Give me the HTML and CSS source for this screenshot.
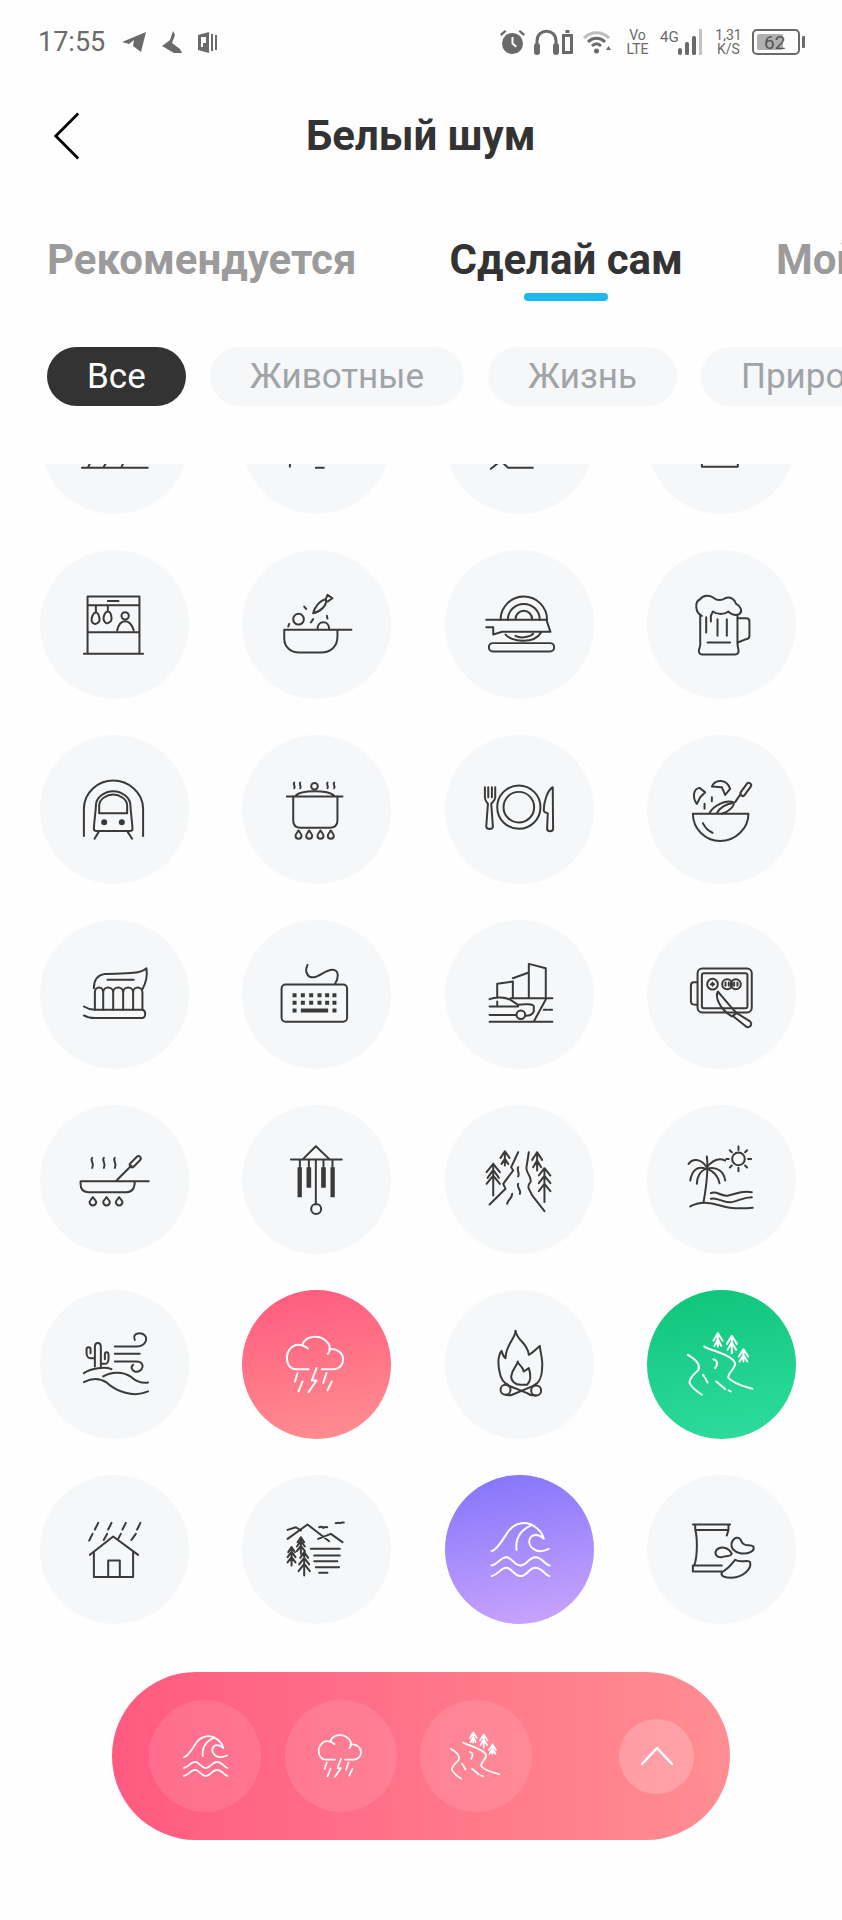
FILE: index.html
```html
<!DOCTYPE html>
<html lang="ru">
  <head>
    <meta charset="UTF-8" />
    <meta name="viewport" content="width=device-width, initial-scale=1.0" />
    <title>Белый шум</title>
    <link rel="stylesheet" href="styles.css">
  </head>
  <body>
    <svg class="sprite">
      <symbol id="wave" viewBox="73 613 448 448">
        <path d="M213 842C235 835 250 800 265 780C285 755 320 750 345 770C360 780 368 795 370 805C355 790 335 790 328 805C320 825 345 855 385 835" />
        <path d="M288 838C285 810 295 780 335 763" />
        <path d="M213 885C235 880 240 860 257 860C275 860 280 885 300 885C320 885 325 860 345 860C365 860 370 880 387 885" />
        <path d="M213 917C235 912 240 892 257 892C275 892 280 917 300 917C320 917 325 892 345 892C365 892 370 912 387 917" />
      </symbol>
      <symbol id="storm" viewBox="668 60 448 448">
        <path d="M868 298H830C805 298 795 265 810 240C825 218 850 222 866 236" />
        <path d="M850 224C860 195 910 190 930 225C935 240 932 245 926 252" />
        <path d="M930 238C955 235 972 250 972 270C972 285 960 298 945 298H908" />
        <path d="M892 295L878 332H892L868 367M835 310L827 335M850 335L838 365M922 310L912 340M938 335L925 362" />
      </symbol>
      <symbol id="river" viewBox="680 60 448 448">
        <path d="M893 230V190M880 212L893 190L907 212M883 228L893 208L903 228M935 250V198M920 222L935 198L950 222M922 240L935 218L948 240M970 275V238M956 260L970 238L984 260M958 275L970 256L982 275" />
        <path d="M852 230C880 245 935 255 945 280C945 300 920 310 925 325C945 345 975 350 997 357" />
        <path d="M803 255C830 270 840 285 835 300C825 310 805 325 808 340C815 355 830 365 845 375" />
        <path d="M880 268C890 270 895 280 885 295M848 315L852 320M855 325L862 338M888 335L915 358M925 362L932 365" />
      </symbol>
    </svg>

    <div class="status">
      <span class="time">17:55</span>
      <svg class="st st-plane" viewBox="0 0 24 20"><path d="M0 10L24 0L19 20L11 14L12 8L7 12Z" /></svg>
      <svg class="st st-shoe" viewBox="0 0 20 22"><path d="M11 0L8 9L0 15L12 22H20L18 18L10 12L13 4Z" /></svg>
      <svg class="st st-book" viewBox="0 0 21 21"><path d="M0 3L11 0V21L0 18ZM13 2H15V19H13ZM17 3H19V18H17Z" /><path class="st-hole" d="M3 5H8V11H5V15H3Z" /></svg>
      <div class="status-right">
        <svg class="st st-alarm" viewBox="0 0 25 24"><circle cx="12.5" cy="13.5" r="10.5" /><path d="M0 4L5 0L6.500 1.500L1.500 6ZM25 4L20 0L18.500 1.500L23.500 6Z" /><path class="st-hole" d="M11.500 7H13.500V13L17 16L15.500 17.500L11.500 14Z" /></svg>
        <svg class="st st-phones" viewBox="0 0 25 26"><path class="st-line" d="M3 18V12C3 -1 22 -1 22 12V18" /><rect x="0" y="14" width="6" height="12" rx="3" /><rect x="19" y="14" width="6" height="12" rx="3" /></svg>
        <svg class="st st-minibat" viewBox="0 0 11 24"><path d="M3.500 0H7.500V3H3.500ZM0 4H11V24H0Z" /><path class="st-hole" d="M3 7H8V21H3Z" /></svg>
        <svg class="st st-wifi" viewBox="0 0 29 24"><path class="st-line st-faint" d="M2 8C9 1 20 1 27 8" /><path class="st-line" d="M6 12C11 7 18 7 23 12M10 16C13 13 16 13 19 16" /><circle cx="14.500" cy="21" r="2.500" /><path d="M24 20L29 20L26.500 16Z" /></svg>
        <span class="st-stack st-volte"><span>Vo</span><span>LTE</span></span>
        <span class="st-4g">4G</span>
        <svg class="st st-bars" viewBox="0 0 24 26"><rect x="0" y="19" width="4" height="7" rx="2" /><rect x="7" y="13" width="4" height="13" rx="1.500" /><rect x="14" y="7" width="4" height="19" rx="1.500" /><rect class="st-faint-fill" x="21" y="0" width="3" height="26" /></svg>
        <span class="st-stack st-speed"><span>1,31</span><span>K/S</span></span>
        <div class="battery"><span class="battery-fill"></span><span class="battery-num">62</span></div>
        <span class="battery-nub"></span>
      </div>
    </div>

    <div class="header">
      <svg class="back" viewBox="0 0 30 52"><path d="M27 2L3 26L27 50" /></svg>
      <h1>Белый шум</h1>
    </div>

    <div class="tabs">
      <div class="tab">Рекомендуется</div>
      <div class="tab active">Сделай сам<span class="tab-line"></span></div>
      <div class="tab">Мой</div>
    </div>

    <div class="chips">
      <div class="chip active">Все</div>
      <div class="chip">Животные</div>
      <div class="chip">Жизнь</div>
      <div class="chip">Природа</div>
    </div>

    <div class="list">
      <div class="grid">
        <!-- row cut off by the scroll edge -->
        <div class="item"><svg class="icon" viewBox="0 0 448 448"><path d="M126 309H324M150 296L144 309M198 296L190 309M250 296L244 309" /></svg></div>
        <div class="item"><svg class="icon" viewBox="0 0 448 448"><path d="M144 300V306M222 309H246" /></svg></div>
        <div class="item"><svg class="icon" viewBox="0 0 448 448"><path d="M138 312L158 296M176 296L190 309H264" /></svg></div>
        <div class="item"><svg class="icon" viewBox="0 0 448 448"><path d="M165 290V306H273V290" /></svg></div>

        <div class="item"><svg class="icon" viewBox="60 60 448 448">
          <path d="M203 372V200H359V372M203 226H359M203 307H359M192 372H370M264 213H296" />
          <circle cx="316" cy="258" r="11" />
          <path d="M292 302C296 282 306 274 316 274S336 282 342 302" />
          <path d="M228 228V248C220 248 215 262 215 270S222 284 228 282S240 276 239 268S234 248 228 248ZM264 228V245C256 245 251 258 251 266S258 282 264 280S276 274 275 264S270 245 264 245Z" />
        </svg></div>
        <div class="item"><svg class="icon" viewBox="668 60 448 448">
          <path d="M795 300H997M795 300V325C795 352 815 368 840 368H905C935 368 955 350 955 320V300" />
          <circle cx="838" cy="268" r="16" />
          <path d="M895 298C895 270 930 270 930 298" />
          <path d="M882 250C885 235 900 212 920 208C925 225 905 245 882 250ZM920 208L925 195L940 205L925 215" />
          <path d="M855 230L861 237M810 282L807 290M882 268L875 278M923 258L925 266" />
        </svg></div>
        <div class="item"><svg class="icon" viewBox="73 60 448 448">
          <path d="M240 270A70 70 0 0 1 380 270M262 270A48 48 0 0 1 358 270M285 268A25 25 0 0 1 335 268" />
          <path d="M197 270H378L390 306H245L218 314V292H197" />
          <path d="M255 314C270 335 340 345 362 308M285 318C295 325 325 325 338 312" />
          <rect x="205" y="340" width="196" height="25" rx="12" />
        </svg></div>
        <div class="item"><svg class="icon" viewBox="680 60 448 448">
          <path d="M840 255V345C840 350 837 355 836 362C835 370 840 374 845 374H945C952 374 957 368 955 360C953 352 952 345 952 340V258" />
          <path d="M953 265H978C985 265 988 270 988 275V318C988 324 984 328 978 328L953 338" />
          <path d="M845 258C825 250 822 215 840 208C850 195 870 195 882 205C890 212 905 212 915 205C930 198 945 210 948 222C962 228 968 245 958 252C945 260 930 252 925 245C912 255 892 255 878 245L872 258V275" />
          <path d="M858 262V308M892 268V318M920 268V318M862 338H930" />
        </svg></div>

        <div class="item"><svg class="icon" viewBox="60 613 448 448">
          <path d="M192 917V835C192 785 235 750 280 750C325 750 370 785 370 835V917" />
          <path d="M222 895C222 880 228 840 228 825C228 800 255 782 280 782C305 782 332 800 332 825C332 840 338 880 338 895C338 900 333 902 330 902H230C225 902 222 900 222 895Z" />
          <path d="M238 848V825C238 805 262 792 280 792C298 792 322 805 322 825V848Z" />
          <circle class="solid" cx="253" cy="875" r="9" /><circle class="solid" cx="306" cy="875" r="9" />
          <path d="M236 905L224 925M324 905L337 925" />
        </svg></div>
        <div class="item"><svg class="icon" viewBox="668 613 448 448">
          <path d="M803 798H970M830 795C845 778 925 778 945 795" />
          <circle cx="886" cy="767" r="10" />
          <path d="M822 798V870C822 885 830 892 845 892H930C945 892 955 885 955 870V798" />
          <path d="M825 756C820 762 830 766 825 773M843 756C838 762 848 766 843 773M925 756C920 762 930 766 925 773M945 756C940 762 950 766 945 773" />
          <path d="M838 900C835 906 829 910 829 916A9 9 0 0 0 847 916C847 910 841 906 838 900ZM870 900C867 906 861 910 861 916A9 9 0 0 0 879 916C879 910 873 906 870 900ZM904 900C901 906 895 910 895 916A9 9 0 0 0 913 916C913 910 907 906 904 900ZM935 900C932 906 926 910 926 916A9 9 0 0 0 944 916C944 910 938 906 935 900Z" />
        </svg></div>
        <div class="item"><svg class="icon" viewBox="73 613 448 448">
          <circle cx="295" cy="830" r="65" /><circle cx="295" cy="830" r="46" />
          <path d="M193 770V800C193 812 200 815 202 820L197 888C197 898 218 898 217 888L212 820C214 815 224 812 224 800V770M203 770V800M214 770V800" />
          <path d="M397 770C380 780 370 815 370 840C370 845 378 848 382 848L380 895C380 905 398 905 398 895Z" />
        </svg></div>
        <div class="item"><svg class="icon" viewBox="680 613 448 448">
          <path d="M818 850H985C985 895 945 932 900 932C855 932 818 895 818 850Z" />
          <path d="M848 878C855 892 865 902 877 907" />
          <path d="M945 815L962 790M962 785L980 760C985 752 997 760 992 768L972 795C967 800 957 792 962 785Z" />
          <path d="M868 848C880 825 915 808 940 815C945 825 925 845 905 850M890 848C900 830 920 820 935 818" />
          <path d="M838 772C820 775 815 800 830 820L840 800L855 785ZM875 768C885 745 920 745 930 775L915 793L905 770Z" />
          <path d="M875 800V812M853 820V835" />
        </svg></div>

        <div class="item"><svg class="icon" viewBox="60 60 448 448">
          <path d="M222 265C222 240 235 225 255 222C300 220 360 225 380 205C384 230 378 250 368 268" />
          <path d="M263 240H342" />
          <path d="M225 330V278C225 258 250 258 250 278V330M250 278C250 258 280 258 280 278V330M280 278C280 258 310 258 310 278V330M310 278C310 258 340 258 340 278V330M340 278C340 258 368 258 368 278V330" />
          <path d="M192 320C200 325 210 330 225 330H365C380 330 380 355 365 355H225C210 355 200 352 192 347" />
        </svg></div>
        <div class="item"><svg class="icon" viewBox="668 60 448 448">
          <rect x="787" y="254" width="197" height="112" rx="12" />
          <path d="M865 195C855 215 865 235 885 232C905 228 925 205 945 210C960 215 958 235 948 252" />
          <path class="solid" d="M820 280h12v12h-12zM845 280h12v12h-12zM870 280h12v12h-12zM895 280h12v12h-12zM918 280h12v12h-12zM940 280h12v12h-12zM820 303h12v12h-12zM845 303h12v12h-12zM870 303h12v12h-12zM895 303h12v12h-12zM918 303h12v12h-12zM940 303h12v12h-12zM820 326h12v12h-12zM845 326h82v12h-82zM940 326h12v12h-12z" />
        </svg></div>
        <div class="item"><svg class="icon" viewBox="73 60 448 448">
          <path d="M230 292V252L277 245V292M277 235L325 218V292M325 192L376 205V292M325 192V292" />
          <path d="M207 298C225 290 255 292 270 300L293 315C310 312 340 312 340 320V335C335 345 325 348 316 348M285 346H207M207 320H293M230 305V320" />
          <circle cx="301" cy="345" r="13" />
          <path d="M270 295H378L340 365M378 295H396M370 330H380M385 330H395M207 366H396" />
        </svg></div>
        <div class="item"><svg class="icon" viewBox="680 60 448 448">
          <rect x="832" y="206" width="163" height="132" rx="14" />
          <rect x="845" y="220" width="137" height="105" rx="6" />
          <path d="M830 247H820C812 247 812 252 812 258V305C812 315 820 315 830 315" />
          <circle cx="877" cy="253" r="16" /><circle cx="921" cy="253" r="15" /><circle cx="947" cy="253" r="15" />
          <path d="M872 253H882M877 248V258M916 248V258M926 248V258M942 248V258M952 248V258" />
          <path d="M893 275C885 290 895 325 935 350L950 340C930 320 910 295 893 275Z" />
          <path d="M950 340L990 365C1000 375 985 390 975 378L940 350" />
        </svg></div>

        <div class="item"><svg class="icon" viewBox="60 613 448 448">
          <path d="M182 842H387M182 842V850C182 865 190 875 205 875H320C335 875 345 865 345 842" />
          <path d="M217 772C209 780 225 786 217 802M252 772C244 780 260 786 252 802M285 772C277 780 293 786 285 802" />
          <path d="M290 840L335 795M330 790L352 768C358 762 368 772 360 780L340 800C335 803 327 795 330 790Z" />
          <path d="M219 890C216 896 209 900 209 905A10 10 0 0 0 229 905C229 900 222 896 219 890ZM260 890C257 896 250 900 250 905A10 10 0 0 0 270 905C270 900 263 896 260 890ZM298 890C295 896 288 900 288 905A10 10 0 0 0 308 905C308 900 301 896 298 890Z" />
        </svg></div>
        <div class="item"><svg class="icon" viewBox="668 613 448 448">
          <path d="M815 777H968M852 775L890 737L930 775M890 777V912M842 777V800M869 777V800M913 777V800M940 777V800" />
          <circle cx="891" cy="926" r="15" />
          <path class="solid" d="M835 800h13v90h-13zM862 800h14v62h-14zM906 800h14v62h-14zM934 800h13v90h-13z" />
        </svg></div>
        <div class="item"><svg class="icon" viewBox="73 613 448 448">
          <path d="M218 885V790M198 815L218 790L238 815M198 850L218 825L238 850M201 832L218 808L235 832" />
          <path d="M253 795V755M240 772L253 752L267 772M243 790L253 775L263 790" />
          <path d="M350 810V755M335 778L350 755L365 778M338 800L350 780L362 800" />
          <path d="M372 905V805M355 825L372 803L390 825M355 848L372 826L390 848M355 872L372 850L390 872" />
          <path d="M293 755L272 800L278 810L248 850L255 865L207 912" />
          <path d="M325 755L318 800C315 815 335 830 330 845C315 860 330 870 335 885L372 932" />
          <path d="M293 800C288 810 298 815 293 828M293 850C288 860 303 870 298 880M275 880C275 895 263 895 260 910" />
        </svg></div>
        <div class="item"><svg class="icon" viewBox="680 613 448 448">
          <circle cx="955" cy="775" r="19" />
          <path d="M955 738V748M955 802V812M918 775H926M984 775H993M929 749L935 755M975 795L981 801M981 749L975 755M929 801L935 795" />
          <path d="M860 768C865 810 858 860 850 905" />
          <path d="M860 800C840 770 815 775 805 790M860 800C885 770 905 775 915 780M858 805C830 795 815 810 810 840M860 805C890 795 912 815 915 840M858 805C840 810 830 830 830 850M862 805C885 815 895 830 898 848" />
          <path d="M872 878C890 868 900 890 925 885S960 870 995 875M872 895C890 888 910 910 935 905S970 890 995 890" />
          <path d="M810 918C840 900 870 905 900 915C930 925 965 925 998 922" />
        </svg></div>

        <div class="item"><svg class="icon" viewBox="60 60 448 448">
          <path d="M225 290V232C225 215 243 215 243 232V290M225 265H212C205 265 200 258 200 250V238C200 230 212 230 212 238V250M243 282H255C262 282 266 275 266 268V255C266 245 255 245 255 255V268" />
          <path d="M192 310C215 295 255 290 275 298M192 337C215 325 240 325 260 338C290 365 340 385 385 365M250 320C275 305 310 305 335 322C350 335 370 340 385 338" />
          <path d="M285 230H350C385 230 390 190 358 190C345 190 340 200 345 210M285 252H360M285 275H350C380 275 370 310 345 305C335 300 332 290 340 285" />
        </svg></div>
        <div class="item selected pink"><svg class="icon"><use href="#storm" /></svg></div>
        <div class="item"><svg class="icon" viewBox="73 60 448 448">
          <path d="M285 183C290 215 320 215 325 255C335 250 345 240 358 228C360 250 368 270 365 295C365 320 355 340 340 347" />
          <path d="M285 183C285 205 255 225 255 265C248 260 245 250 243 243C232 258 232 285 238 310C240 325 250 340 262 345" />
          <path d="M292 275C292 285 305 285 310 305L325 295C330 310 335 330 320 345M292 275C290 290 275 295 272 320C272 335 285 345 300 345H320" />
          <circle cx="255" cy="360" r="15" /><circle cx="347" cy="362" r="15" />
          <path d="M258 345L320 370C330 378 340 378 347 377M342 347L275 375C268 378 262 376 255 375" />
        </svg></div>
        <div class="item selected green"><svg class="icon"><use href="#river" /></svg></div>

        <div class="item"><svg class="icon" viewBox="60 613 448 448">
          <path d="M210 853L280 798L355 853M222 843V920H340V843M265 920V870H300V920" />
          <path d="M235 757L225 777M275 757L265 777M318 757L308 777M362 757L352 777M218 790L208 810M262 790L252 808M303 790L295 805M348 790L335 808" />
        </svg></div>
        <div class="item"><svg class="icon" viewBox="668 613 448 448">
          <path d="M805 805L865 762L930 812M805 778L830 770L845 780M897 805L935 790L970 815" />
          <path d="M900 770Q908 767 912 772Q918 768 924 770M950 758Q958 755 962 758Q968 755 974 756" />
          <path d="M845 800V850M835 815L845 800L855 815M833 828L845 812L857 828M833 842L845 826L857 842" />
          <path d="M817 830V885M807 845L817 830L827 845M805 860L817 844L829 860M805 876L817 860L829 876" />
          <path d="M855 845V915M843 862L855 845L867 862M840 882L855 862L870 882M838 902L855 880L872 902" />
          <path d="M875 835H962M885 855H962M885 872H955M890 890H960M900 907H925" />
        </svg></div>
        <div class="item selected purple"><svg class="icon"><use href="#wave" /></svg></div>
        <div class="item"><svg class="icon" viewBox="680 613 448 448">
          <path d="M818 762H930M825 778H925M825 762V778C832 800 832 860 822 885M925 762V778L920 795M818 885H905M818 903H905M818 885V903" />
          <path d="M935 815C945 795 960 800 965 815C975 830 990 820 1000 828C1005 845 980 852 960 848C945 845 930 835 935 815Z" />
          <path d="M888 840C900 825 925 830 935 850C930 860 915 855 905 860C890 862 882 850 888 840Z" />
          <path d="M905 905C925 895 935 880 945 868C960 880 985 865 990 875C995 895 970 920 935 922C915 922 900 918 905 905Z" />
        </svg></div>
      </div>
    </div>

    <div class="player">
      <div class="slot"><svg class="icon"><use href="#wave" /></svg></div>
      <div class="slot"><svg class="icon"><use href="#storm" /></svg></div>
      <div class="slot"><svg class="icon"><use href="#river" /></svg></div>
      <button class="up"><svg viewBox="0 0 32 18"><path d="M1 17L16 1L31 17" /></svg></button>
    </div>
  </body>
</html>
```

FILE: styles.css
```css
* {
  margin: 0;
  padding: 0;
  box-sizing: border-box;
  font-family: Roboto, "Liberation Sans", sans-serif;
}

body {
  width: 842px;
  height: 1920px;
  overflow: hidden;
  background-color: #fefefe;
}

.sprite {
  display: none;
}

/* status bar */
.status {
  display: flex;
  align-items: center;
  height: 84px;
  padding-left: 38px;
  color: #6a6a6a;
}

.time {
  font-size: 27px;
  line-height: 84px;
  margin-right: 17px;
}

.st {
  display: block;
  fill: #6a6a6a;
}

.st-hole {
  fill: #fefefe;
}

.st-line {
  fill: none;
  stroke: #6a6a6a;
  stroke-width: 3px;
}

.st-faint {
  stroke: #bdbdbd;
}

.st-faint-fill {
  fill: #c4c4c4;
}

.st-plane {
  width: 24px;
  height: 20px;
  margin-right: 16px;
}

.st-shoe {
  width: 20px;
  height: 22px;
  margin-right: 16px;
}

.st-book {
  width: 21px;
  height: 21px;
}

.status-right {
  display: flex;
  align-items: center;
  margin-left: auto;
  padding-right: 37px;
}

.st-alarm {
  width: 25px;
  height: 24px;
  margin-right: 9px;
}

.st-phones {
  width: 25px;
  height: 26px;
  margin-right: 3px;
}

.st-minibat {
  width: 11px;
  height: 24px;
  margin-right: 9px;
}

.st-wifi {
  width: 29px;
  height: 24px;
  margin-right: 15px;
}

.st-stack {
  display: flex;
  flex-direction: column;
  align-items: center;
  line-height: 14px;
  font-size: 14px;
}

.st-volte {
  width: 23px;
  margin-right: 11px;
}

.st-4g {
  font-size: 15px;
  width: 18px;
  margin-bottom: 10px;
}

.st-bars {
  width: 24px;
  height: 26px;
  margin-right: 13px;
}

.st-speed {
  width: 27px;
  margin-right: 10px;
}

.battery {
  display: flex;
  align-items: center;
  width: 48px;
  height: 26px;
  padding: 3px;
  border: 2px solid #6a6a6a;
  border-radius: 5px;
}

.battery-fill {
  display: block;
  width: 26px;
  height: 100%;
  background-color: #b0b0b0;
  border-radius: 2px;
}

.battery-num {
  font-size: 19px;
  color: #555;
  margin-left: -19px;
}

.battery-nub {
  width: 3px;
  height: 12px;
  margin-left: 2px;
  background-color: #6a6a6a;
  border-radius: 1px;
}

/* title */
.header {
  display: flex;
  align-items: center;
  height: 104px;
  padding-left: 53px;
}

.back {
  width: 28px;
  height: 50px;
  fill: none;
  stroke: #000;
  stroke-width: 3px;
}

.header h1 {
  margin-left: 225px;
  font-size: 42px;
  font-weight: 700;
  line-height: 46px;
  color: #333;
}

/* tabs */
.tabs {
  display: flex;
  gap: 93px;
  height: 159px;
  padding-top: 49px;
  padding-left: 47px;
  white-space: nowrap;
  overflow: hidden;
}

.tab {
  display: flex;
  flex-direction: column;
  align-items: center;
  font-size: 42px;
  font-weight: 700;
  line-height: 46px;
  color: #9b9b9b;
}

.tab.active {
  color: #333;
}

.tab-line {
  display: block;
  width: 84px;
  height: 8px;
  margin-top: 10px;
  background-color: #1cb8ec;
  border-radius: 4px;
}

/* category chips */
.chips {
  display: flex;
  gap: 24px;
  height: 117px;
  padding-left: 47px;
  white-space: nowrap;
  overflow: hidden;
}

.chip {
  flex-shrink: 0;
  height: 59px;
  padding: 0 40px;
  font-size: 35px;
  line-height: 59px;
  color: #a0a3a8;
  background-color: #f5f7f9;
  border-radius: 30px;
}

.chip.active {
  color: #fff;
  background-color: #333;
}

/* sound grid */
.list {
  height: 1208px;
  overflow: hidden;
}

.grid {
  display: grid;
  grid-template-columns: repeat(4, 149px);
  column-gap: 53.33px;
  row-gap: 36px;
  margin-top: -99px;
  padding-left: 40px;
}

.item {
  width: 149px;
  height: 149px;
  color: #3a3a3a;
  background-color: #f5f7f9;
  border-radius: 50%;
}

.item.selected {
  color: #fff;
}

.pink {
  background-image: linear-gradient(170deg, #ff5a7e, #ff8f91);
}

.green {
  background-image: linear-gradient(170deg, #0fc47a, #2fdd9f);
}

.purple {
  background-image: linear-gradient(170deg, #8373fb, #cba6fc);
}

.icon {
  display: block;
  width: 100%;
  height: 100%;
  fill: none;
  stroke: currentColor;
  stroke-width: 6px;
  stroke-linecap: round;
  stroke-linejoin: round;
}

.solid {
  fill: currentColor;
  stroke: none;
}

/* player bar */
.player {
  display: flex;
  align-items: center;
  gap: 23.5px;
  position: absolute;
  left: 112px;
  top: 1672px;
  width: 618px;
  height: 168px;
  padding: 0 36px 0 37px;
  color: #fff;
  background-image: linear-gradient(90deg, #ff5a80, #ff8e92);
  border-radius: 84px;
}

.slot {
  width: 112px;
  height: 112px;
  background-color: rgba(255, 255, 255, 0.1);
  border-radius: 50%;
}

.slot .icon {
  stroke-width: 7px;
}

.up {
  display: flex;
  align-items: center;
  justify-content: center;
  width: 75px;
  height: 75px;
  margin-left: auto;
  border: none;
  background-color: rgba(255, 255, 255, 0.2);
  border-radius: 50%;
}

.up svg {
  width: 32px;
  height: 18px;
  fill: none;
  stroke: #fff;
  stroke-width: 2.5px;
  stroke-linecap: round;
}
```
